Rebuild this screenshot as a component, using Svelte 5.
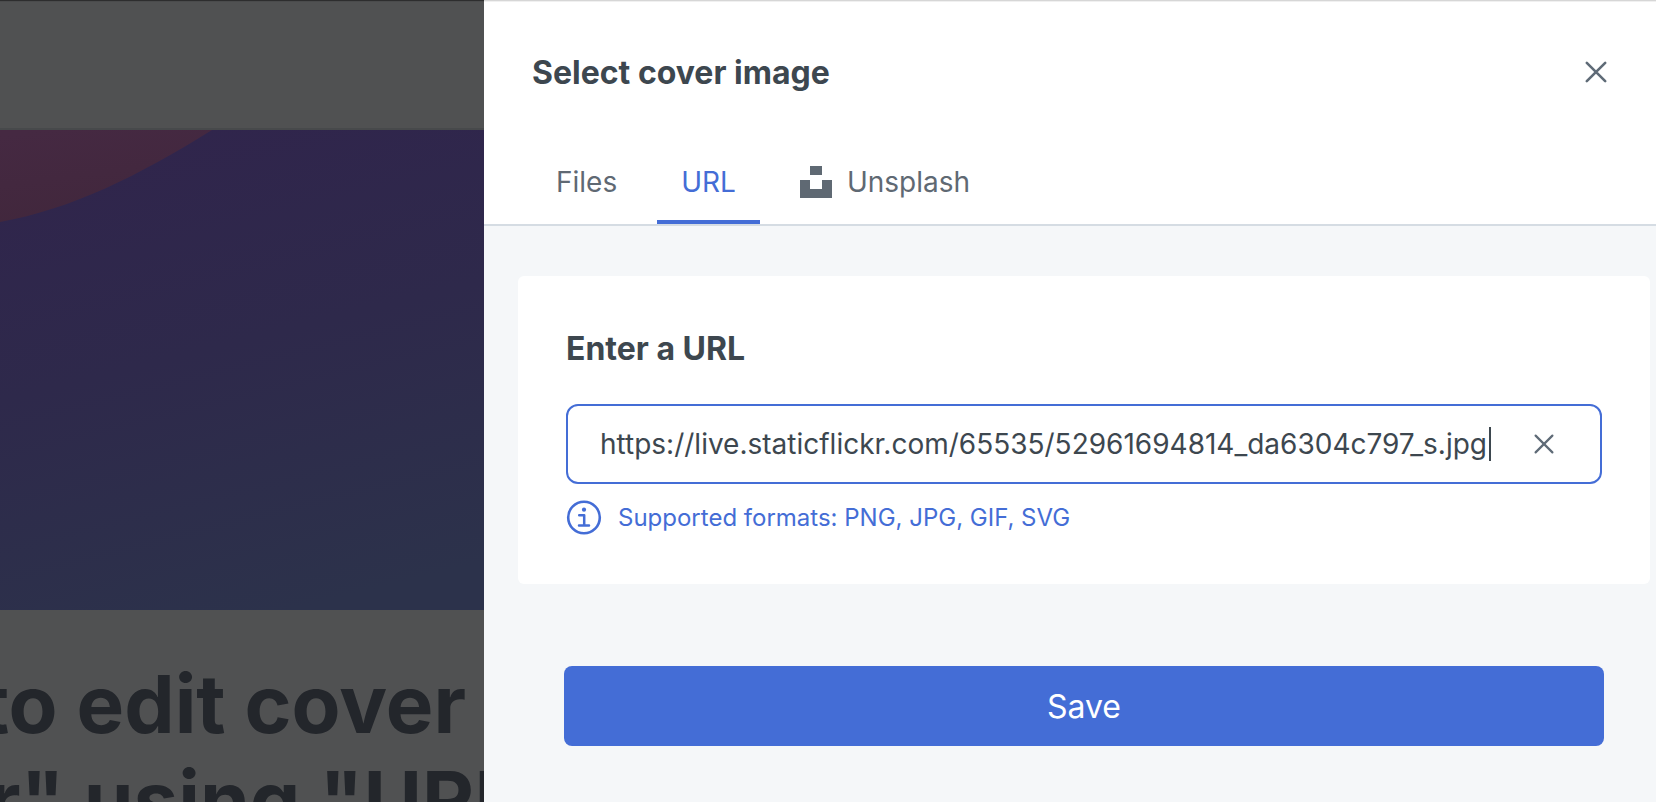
<script>
  let url = $state('https://live.staticflickr.com/65535/52961694814_da6304c797_s.jpg');
  let active = $state('URL');
  const tabs = ['Files', 'URL', 'Unsplash'];
</script>

<div class="layout">
  <main class="page">
    <div class="topbar"></div>
    <svg class="cover" viewBox="0 0 484 480" preserveAspectRatio="none" aria-hidden="true">
      <defs>
        <linearGradient id="sky" x1="0.35" y1="0" x2="0.6" y2="1">
          <stop offset="0" stop-color="#30254c" />
          <stop offset="0.45" stop-color="#2e294b" />
          <stop offset="1" stop-color="#2c324b" />
        </linearGradient>
        <linearGradient id="hill" x1="0.2" y1="0" x2="0.5" y2="1">
          <stop offset="0" stop-color="#452942" />
          <stop offset="1" stop-color="#41273c" />
        </linearGradient>
      </defs>
      <rect width="484" height="480" fill="url(#sky)" />
      <path d="M0 0H212C138 46 72 79 0 92Z" fill="url(#hill)" />
    </svg>
    <h1>
      <span class="line line-end">to edit cover</span>
      <span class="line line-start">r" using "URL</span>
    </h1>
  </main>

  <aside class="drawer">
    <header>
      <h2>Select cover image</h2>
      <button class="icon-button" aria-label="Close">
        <svg width="24" height="24" viewBox="0 0 24 24" fill="none" stroke="currentColor" stroke-width="2.6" stroke-linecap="round">
          <path d="M2.8 2.8 21.2 21.2M21.2 2.8 2.8 21.2" />
        </svg>
      </button>
    </header>

    <nav>
      {#each tabs as tab}
        <button class="tab" class:active={active === tab} onclick={() => (active = tab)}>
          {#if tab === 'Unsplash'}
            <svg width="32" height="32" viewBox="0 0 32 32" fill="currentColor" aria-hidden="true">
              <path d="M10 0h12v9H10zM0 14h10v9h12v-9h10v18H0z" />
            </svg>
          {/if}
          {tab}
        </button>
      {/each}
    </nav>

    <div class="body">
      <section class="card">
        <label for="cover-url">Enter a URL</label>
        <div class="field">
          <div class="value">
            <input id="cover-url" type="text" spellcheck="false" bind:value={url} />
            <span class="caret"></span>
          </div>
          <button class="icon-button" aria-label="Clear" onclick={() => (url = '')}>
            <svg width="24" height="24" viewBox="0 0 24 24" fill="none" stroke="currentColor" stroke-width="2.2" stroke-linecap="round">
              <path d="M3.6 3.6 20.4 20.4M20.4 3.6 3.6 20.4" />
            </svg>
          </button>
        </div>
        <p class="hint">
          <svg width="36" height="36" viewBox="0 0 36 36" fill="none" stroke="currentColor" aria-hidden="true">
            <circle cx="18" cy="17.5" r="15.8" stroke-width="2.6" />
            <circle cx="18" cy="9.7" r="2.1" fill="currentColor" stroke="none" />
            <path d="M13.2 15.2H18.2V25.6M13 25.6H23" stroke-width="2.5" stroke-linecap="round" stroke-linejoin="round" />
          </svg>
          Supported formats: PNG, JPG, GIF, SVG
        </p>
      </section>

      <button class="save">Save</button>
    </div>
  </aside>
</div>

<style>
  :global(body) {
    margin: 0;
    font-family: Inter, 'Liberation Sans', sans-serif;
  }

  .layout {
    display: grid;
    grid-template-columns: minmax(0, 484fr) minmax(0, 1172fr);
    height: 100vh;
    overflow: hidden;
  }

  .page {
    overflow: hidden;
    background: #505152;
  }

  .topbar {
    box-sizing: border-box;
    height: 130px;
    border-top: 1px solid #2d2d2e;
    border-bottom: 2px solid #47494b;
    box-shadow: inset 0 1px #4a4b4c;
  }

  .cover {
    display: block;
    width: 100%;
    height: 480px;
  }

  h1 {
    margin: 46px 0 0;
    font-size: 80px;
    line-height: 96px;
    font-weight: 700;
    color: #23262b;
  }

  .line {
    display: flex;
    white-space: nowrap;
  }

  .line-end {
    justify-content: flex-end;
    padding-right: 18px;
  }

  .line-start {
    margin-left: -12px;
  }

  .drawer {
    display: flex;
    flex-direction: column;
    box-sizing: border-box;
    border-top: 1px solid #d6d6d6;
    background: #fff;
    box-shadow: inset 0 1px #f0f0f0;
  }

  button {
    padding: 0;
    border: 0;
    background: none;
    font: inherit;
    color: inherit;
    cursor: pointer;
  }

  header {
    display: flex;
    align-items: center;
    justify-content: space-between;
    padding: 50px 48px 51px;
  }

  h2,
  label {
    margin: 0;
    padding-top: 2px;
    font-size: 32px;
    line-height: 40px;
    font-weight: 700;
    color: #3d474f;
  }

  .icon-button {
    display: flex;
    color: #5f6b77;
  }

  nav {
    display: flex;
    gap: 16px;
    padding: 0 48px;
    border-bottom: 2px solid #d5dce3;
  }

  .tab {
    display: flex;
    align-items: center;
    gap: 15px;
    box-sizing: border-box;
    height: 80px;
    padding: 0 24px;
    border-bottom: 4px solid transparent;
    font-size: 28px;
    color: #5f6973;
  }

  .tab.active {
    border-color: #446dd6;
    color: #446dd6;
  }

  .body {
    flex: 1;
    padding: 50px 6px 0 34px;
    background: #f5f7f9;
  }

  .card {
    display: flex;
    flex-direction: column;
    padding: 51px 48px 48px;
    border-radius: 6px;
    background: #fff;
  }

  .field {
    display: flex;
    align-items: center;
    justify-content: space-between;
    box-sizing: border-box;
    height: 80px;
    margin-top: 35px;
    padding: 0 44px 0 32px;
    border: 2px solid #446dd6;
    border-radius: 12px;
  }

  .value {
    display: flex;
    align-items: center;
    gap: 2px;
    min-width: 0;
  }

  input {
    field-sizing: content;
    min-width: 0;
    padding: 0;
    border: 0;
    outline: 0;
    background: none;
    font: inherit;
    font-size: 28px;
    line-height: 36px;
    color: #3d474f;
    caret-color: transparent;
  }

  .caret {
    width: 2px;
    height: 34px;
    background: #3d474f;
  }

  .hint {
    display: flex;
    align-items: center;
    gap: 16px;
    margin: 16px 0 0;
    font-size: 24px;
    line-height: 36px;
    color: #446dd6;
  }

  .save {
    display: block;
    width: calc(100% - 92px);
    height: 80px;
    margin: 82px 46px 0;
    border-radius: 8px;
    background: #446dd6;
    font-size: 32px;
    color: #fff;
  }
</style>
